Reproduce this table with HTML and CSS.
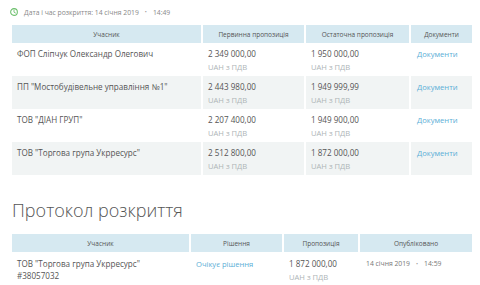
FILE: index.html
```html
<!DOCTYPE html>
<html lang="uk">
<head>
<meta charset="utf-8">
<link rel="stylesheet" href="styles.css">
</head>
<body>
<div class="page">
  <div class="date-line">
    <svg class="clock" width="8" height="8" viewBox="0 0 10 10"><circle cx="5" cy="5" r="4.2" fill="none" stroke="#6cbf6c" stroke-width="1.3"/><path d="M5 2.6V5.2L6.8 6.2" fill="none" stroke="#6cbf6c" stroke-width="1.1" stroke-linecap="round"/></svg>
    <span>Дата і час розкриття: 14 січня 2019</span><span class="dot">•</span><span>14:49</span>
  </div>
  <table class="bids">
    <colgroup><col class="c1"><col class="c2"><col class="c3"><col class="c4"></colgroup>
    <thead>
      <tr><th>Учасник</th><th>Первинна пропозиція</th><th>Остаточна пропозиція</th><th>Документи</th></tr>
    </thead>
    <tbody>
      <tr><td>ФОП Слiпчук Олександр Олегович</td><td>2 349 000,00<div class="sub">UAH з ПДВ</div></td><td>1 950 000,00<div class="sub">UAH з ПДВ</div></td><td><a class="link">Документи</a></td></tr>
      <tr class="alt"><td>ПП "Мостобудівельне управління №1"</td><td>2 443 980,00<div class="sub">UAH з ПДВ</div></td><td>1 949 999,99<div class="sub">UAH з ПДВ</div></td><td><a class="link">Документи</a></td></tr>
      <tr><td>ТОВ "ДІАН ГРУП"</td><td>2 207 400,00<div class="sub">UAH з ПДВ</div></td><td>1 949 900,00<div class="sub">UAH з ПДВ</div></td><td><a class="link">Документи</a></td></tr>
      <tr class="alt"><td>ТОВ "Торгова група Укрресурс"</td><td>2 512 800,00<div class="sub">UAH з ПДВ</div></td><td>1 872 000,00<div class="sub">UAH з ПДВ</div></td><td><a class="link">Документи</a></td></tr>
    </tbody>
  </table>
  <h2 class="title">Протокол розкриття</h2>
  <table class="protocol">
    <colgroup><col class="p1"><col class="p2"><col class="p3"><col class="p4"></colgroup>
    <thead>
      <tr><th>Учасник</th><th>Рішення</th><th>Пропозиція</th><th>Опубліковано</th></tr>
    </thead>
    <tbody>
      <tr><td>ТОВ "Торгова група Укрресурс"<br>#38057032</td><td><a class="link">Очікує рішення</a></td><td>1 872 000,00<div class="sub">UAH з ПДВ</div></td><td class="pub">14 січня 2019<span class="dot">•</span>14:59</td></tr>
    </tbody>
  </table>
</div>
</body>
</html>
```
FILE: styles.css
```css
html, body { margin: 0; padding: 0; background: #fff; }
body { font-family: "Open Sans", "Noto Sans", sans-serif; color: #555; }
.page { padding: 0 8px 0 12px; }
.date-line { display: flex; align-items: center; height: 25px; font-size: 6.8px; color: #888; padding-bottom: 1px; box-sizing: border-box; }
.clock { margin: 0 6px 0 -2px; }
.dot { margin: 0 6px; font-size: 5.5px; color: #999; }
table { border-collapse: collapse; width: 460px; table-layout: fixed; }
th { background: #d6e9f1; font-weight: 400; font-size: 6.5px; color: #555; height: 18px; padding: 0; border-left: 2px solid #fff; border-right: 2px solid #fff; }
th:first-child { border-left: 0; }
th:last-child { border-right: 0; }
td { font-size: 8.1px; color: #555; vertical-align: top; padding: 5px 0 0 5px; height: 28px; border-left: 2px solid #fff; border-right: 2px solid #fff; line-height: 12px; }
td:first-child { border-left: 0; }
td:last-child { border-right: 0; }
tr.alt td { background: #f1f4f4; }
.sub { font-size: 7.6px; line-height: 14px; color: #aeb4b7; }
.link { color: #5aaed6; font-size: 7.6px; }
col.c1 { width: 190px; } col.c2 { width: 103px; } col.c3 { width: 105px; } col.c4 { width: 62px; }
.bids td:nth-child(4) { padding-left: 6px; }
.title { font-weight: 300; font-size: 18px; color: #555; margin: 22px 0 0 0; height: 37px; line-height: 26px; }
col.p1 { width: 178px; } col.p2 { width: 93px; } col.p3 { width: 76px; } col.p4 { width: 113px; }
.protocol td { padding-top: 6px; }
.protocol td.pub { font-size: 6.8px; color: #777; padding-left: 6px; padding-top: 6px; }
.protocol td.pub .dot { margin: 0 6px; }
```
